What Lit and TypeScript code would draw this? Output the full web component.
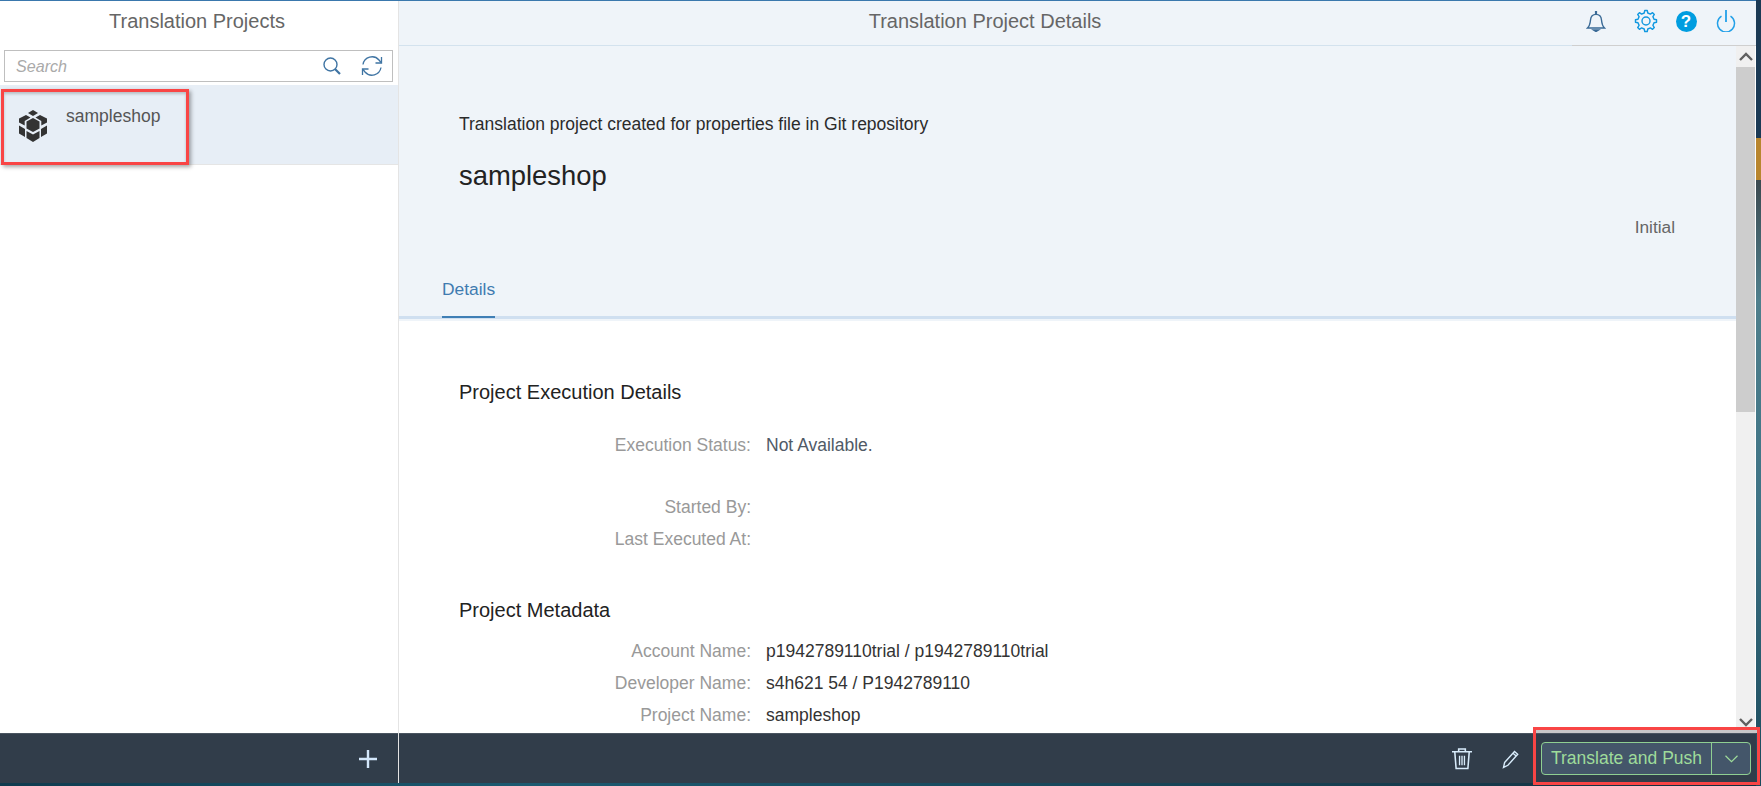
import { LitElement, html, css, svg } from 'lit'
import { customElement } from 'lit/decorators.js'

// outline of a gear with rounded-ish teeth, centred on 12,12
function gearPath(teeth = 8, outer = 10.6, inner = 8.2) {
    const pts: string[] = []
    const step = (Math.PI * 2) / teeth
    for (let i = 0; i < teeth; i++) {
        const a = i * step - Math.PI / 2
        const corners: [number, number][] = [
            [a - step * 0.28, inner],
            [a - step * 0.15, outer],
            [a + step * 0.15, outer],
            [a + step * 0.28, inner]
        ]
        for (const [ang, r] of corners) {
            pts.push(`${(12 + Math.cos(ang) * r).toFixed(2)} ${(12 + Math.sin(ang) * r).toFixed(2)}`)
        }
    }
    return 'M' + pts.join('L') + 'Z'
}

const cubeIcon = svg`
    <polygon points="14,0 19,3 14,6 9,3" />
    <polygon points="14,8 20.5,11.5 20.5,18.5 14,22 7.5,18.5 7.5,11.5" />
    <polygon points="7,5 11.5,7.5 5.7,11 5.7,15.5 0,12.5 0,8.5" />
    <polygon points="21,5 16.5,7.5 22.3,11 22.3,15.5 28,12.5 28,8.5" />
    <polygon points="0,15.5 6,19 6,27 0,23.5" />
    <polygon points="28,15.5 22,19 22,27 28,23.5" />
    <polygon points="7.5,21 14,24.5 20.5,21 20.5,28 14,32 7.5,28" />
`

const metadata = [
    ['Account Name:', 'p1942789110trial / p1942789110trial'],
    ['Developer Name:', 's4h621 54 / P1942789110'],
    ['Project Name:', 'sampleshop']
]

@customElement('app-root')
export class AppRoot extends LitElement {
    static styles = css`
        :host {
            display: flex;
            position: relative;
            width: 1761px;
            height: 786px;
            overflow: hidden;
            font-family: 'Liberation Sans', Arial, sans-serif;
            font-size: 17.3px;
            background: linear-gradient(
                to bottom,
                #1b3a55 0,
                #1b3a55 138px,
                #b8862f 138px,
                #b8862f 180px,
                #3c4a50 180px,
                #4f7f8c 300px,
                #3f7486 500px,
                #1a4a5c 786px
            );
        }

        .window {
            width: 1756px;
            display: flex;
            flex-direction: column;
            border-top: 1px solid #3a78ad;
            box-sizing: border-box;
        }

        .panes {
            display: flex;
            height: 782px;
            background: #fff;
        }

        .bottom-strip {
            height: 3px;
            background: linear-gradient(to right, #0f3b4e, #1c5a70 30%, #14303f);
        }

        .master {
            width: 398px;
            display: flex;
            flex-direction: column;
            border-right: 1px solid #e4e4e4;
            flex: none;
        }

        .detail {
            flex: 1;
            min-width: 0;
            display: flex;
            flex-direction: column;
        }

        .master-title {
            height: 44px;
            line-height: 40px;
            padding-right: 4px;
            text-align: center;
            font-size: 20px;
            color: #666;
        }

        .search {
            display: flex;
            align-items: center;
            height: 32px;
            margin: 5px 5px 3px 4px;
            padding: 0 9px 0 11px;
            border: 1px solid #bfbfbf;
            box-sizing: border-box;
            font-size: 16.1px;
            font-style: italic;
            color: #aaa;
        }

        .search span {
            flex: 1;
        }

        .search svg {
            display: block;
            fill: none;
            stroke: #3f74a3;
        }

        .search .find {
            margin-right: 19px;
        }

        .list {
            flex: 1;
        }

        .item {
            display: flex;
            height: 80px;
            padding: 25px 0 0 19px;
            box-sizing: border-box;
            background: #e7eef6;
            border-bottom: 1px solid #e5e5e5;
        }

        .item svg {
            fill: #333;
            flex: none;
        }

        .item span {
            margin: 0 0 0 19px;
            position: relative;
            top: -4px;
            font-size: 17.5px;
            line-height: 20px;
            color: #555;
        }

        .footer {
            height: 50px;
            flex: none;
            display: flex;
            align-items: center;
            justify-content: flex-end;
            box-sizing: border-box;
            background: #313d4a;
            border-top: 1px solid #4a5560;
        }

        .master .footer {
            padding-right: 21px;
        }

        .footer svg {
            display: block;
            fill: none;
        }

        .detail-bar {
            height: 45px;
            flex: none;
            display: flex;
            align-items: center;
            background: #eff4f9;
            box-sizing: border-box;
            border-bottom: 1px solid;
            border-image: linear-gradient(to right, #d3e2ee 1172px, #cfcfcf 1172px) 1;
        }

        .detail-title {
            flex: 1;
            text-align: center;
            font-size: 20px;
            color: #666;
            margin-top: -4px;
        }

        .shell-icons {
            width: 185px;
            height: 100%;
            display: flex;
            justify-content: flex-end;
            align-items: center;
            padding-right: 10px;
            box-sizing: border-box;
        }

        .slot {
            width: 40px;
            display: flex;
            justify-content: center;
            margin-top: -4px;
        }

        .slot.bell {
            margin-right: 10px;
        }

        .slot svg {
            display: block;
            fill: none;
        }

        .help {
            width: 21px;
            height: 21px;
            border-radius: 50%;
            background: #009de0;
            color: #fff;
            font-weight: 700;
            font-size: 17px;
            line-height: 21px;
            text-align: center;
        }

        .body {
            flex: 1;
            min-height: 0;
            display: flex;
            padding-right: 1px;
            box-sizing: border-box;
            background: #fff;
        }

        .scroller {
            flex: 1;
            min-width: 0;
            overflow: hidden;
        }

        .scrollbar {
            width: 19px;
            flex: none;
            display: flex;
            flex-direction: column;
            background: #f0f0f0;
        }

        .scrollbar .arrow {
            height: 21px;
            flex: none;
            display: flex;
            align-items: center;
            justify-content: center;
        }

        .scrollbar .arrow svg {
            display: block;
            fill: none;
            stroke: #606060;
            stroke-width: 2.4;
        }

        .scrollbar .thumb {
            height: 345px;
            flex: none;
            background: #cdcdcd;
        }

        .scrollbar .rest {
            flex: 1;
        }

        .object-header {
            background: #eff4f9;
            padding-top: 68px;
            height: 270px;
            box-sizing: border-box;
        }

        .object-header .sub {
            margin: 0 0 0 60px;
            line-height: 20px;
            font-size: 17.5px;
            color: #2b2b2b;
        }

        .object-header h1 {
            margin: 26px 0 0 60px;
            font-size: 27.4px;
            font-weight: 400;
            line-height: 32px;
            color: #222;
        }

        .object-header .state {
            margin: 25px 61px 0 0;
            text-align: right;
            line-height: 20px;
            color: #666;
        }

        .tabs {
            display: flex;
            height: 0;
            background: #eff4f9;
            border-bottom: 3px solid #cfdff0;
            box-shadow: 0 2px 0 #eff4f9;
            padding-left: 43px;
        }

        .tab {
            height: 39px;
            line-height: 20px;
            margin-top: -37px;
            box-sizing: border-box;
            border-bottom: 2px solid #3f7fb5;
            color: #3f7bb0;
            font-size: 17.4px;
        }

        .content {
            padding: 61px 0 0 60px;
        }

        h2 {
            margin: 0;
            font-size: 20px;
            font-weight: 400;
            line-height: 24px;
            color: #222;
        }

        .form {
            display: grid;
            grid-template-columns: 292px 1fr;
            column-gap: 15px;
            grid-auto-rows: 32px;
            line-height: 32px;
            font-size: 17.5px;
        }

        .form .label {
            text-align: right;
            color: #999;
        }

        .form .value {
            color: #333;
        }

        .form.status {
            margin-top: 25px;
        }

        .form.status .value {
            color: #505a66;
        }

        .form.exec {
            margin-top: 30px;
        }

        .content h2.second {
            margin-top: 43px;
        }

        .form.meta {
            margin-top: 13px;
        }

        .actions {
            padding-right: 5px;
        }

        .actions .trash {
            margin-right: 29px;
        }

        .actions .pencil {
            margin-right: 16px;
        }

        .split {
            display: flex;
            height: 33px;
            border: 1px solid #8fcf92;
            border-radius: 4px;
            box-sizing: border-box;
            background: #44566a;
            color: #9fdc9a;
            line-height: 31px;
            font-size: 17.5px;
            margin-left: 4px;
        }

        .split .label {
            width: 169px;
            text-align: center;
            border-right: 1px solid #8fcf92;
        }

        .split .more {
            width: 38px;
            display: flex;
            align-items: center;
            justify-content: center;
        }

        .mark {
            position: absolute;
            box-sizing: border-box;
            border: 3px solid #f94545;
            pointer-events: none;
        }

        .mark.item-mark {
            left: 1px;
            top: 89px;
            width: 188px;
            height: 76px;
            box-shadow: 2px 2px 4px rgba(0, 0, 0, 0.35), inset 0 2px 3px rgba(0, 0, 0, 0.2);
        }

        .mark.button-mark {
            left: 1533px;
            top: 727px;
            width: 227px;
            height: 58px;
            box-shadow: inset 0 3px 0 #c8c8c8;
        }
    `

    render() {
        return html`
            <div class="window">
                <div class="panes">
                    <section class="master">
                        <div class="master-title">Translation Projects</div>
                        <div class="search">
                            <span>Search</span>
                            <svg class="find" width="20" height="20" viewBox="0 0 20 20">
                                <circle cx="8.5" cy="8.5" r="6.5" stroke-width="1.4" />
                                <path d="M13 13l5 5" stroke-width="2.2" />
                            </svg>
                            <svg width="22" height="22" viewBox="0 0 22 22" stroke-width="1.3">
                                <path d="M2 9.5A9.2 9.2 0 0 1 18 5l2 2.5" />
                                <path d="M20.5 2v6h-6" />
                                <path d="M20 12.5A9.2 9.2 0 0 1 4 17l-2-2.5" />
                                <path d="M1.5 20v-6h6" />
                            </svg>
                        </div>
                        <div class="list">
                            <div class="item">
                                <svg width="28" height="32" viewBox="0 0 28 32">${cubeIcon}</svg>
                                <span>sampleshop</span>
                            </div>
                        </div>
                        <div class="footer">
                            <svg width="18" height="18" viewBox="0 0 18 18">
                                <path d="M9 0v18M0 9h18" stroke="#d3e7fb" stroke-width="2.4" />
                            </svg>
                        </div>
                    </section>
                    <section class="detail">
                        <div class="detail-bar">
                            <div class="detail-title">Translation Project Details</div>
                            <div class="shell-icons">
                                <div class="slot bell">
                                    <svg width="20" height="22" viewBox="0 0 20 22" stroke="#3a6a96" stroke-width="1.4">
                                        <path d="M1.5 18c2-2 2.6-3.5 3-8 .3-3.4 2-5.6 5.5-5.6s5.2 2.2 5.5 5.6c.4 4.5 1 6 3 8z" />
                                        <path d="M10 1v3.4" stroke-width="2.2" />
                                        <path d="M7.5 20h5l-2.5 1.5z" fill="#3a6a96" />
                                    </svg>
                                </div>
                                <div class="slot">
                                    <svg width="24" height="24" viewBox="0 0 24 24" stroke="#1098e0" stroke-width="1.4">
                                        <path d="${gearPath()}" stroke-linejoin="round" />
                                        <circle cx="12" cy="12" r="4" />
                                    </svg>
                                </div>
                                <div class="slot"><div class="help">?</div></div>
                                <div class="slot">
                                    <svg width="20" height="22" viewBox="0 0 20 22" stroke="#22a0e8" stroke-width="1.5">
                                        <path d="M5.5 6.2a8.5 8.5 0 1 0 9 0" />
                                        <path d="M10 0v12" stroke-width="1.8" />
                                    </svg>
                                </div>
                            </div>
                        </div>
                        <div class="body">
                            <div class="scroller">
                                <div class="object-header">
                                    <p class="sub">Translation project created for properties file in Git repository</p>
                                    <h1>sampleshop</h1>
                                    <div class="state">Initial</div>
                                </div>
                                <div class="tabs"><div class="tab">Details</div></div>
                                <div class="content">
                                    <h2>Project Execution Details</h2>
                                    <div class="form status">
                                        <div class="label">Execution Status:</div>
                                        <div class="value">Not Available.</div>
                                    </div>
                                    <div class="form exec">
                                        <div class="label">Started By:</div>
                                        <div class="value"></div>
                                        <div class="label">Last Executed At:</div>
                                        <div class="value"></div>
                                    </div>
                                    <h2 class="second">Project Metadata</h2>
                                    <div class="form meta">
                                        ${metadata.map(
                                            ([label, value]) => html`
                                                <div class="label">${label}</div>
                                                <div class="value">${value}</div>
                                            `
                                        )}
                                    </div>
                                </div>
                            </div>
                            <div class="scrollbar">
                                <div class="arrow">
                                    <svg width="14" height="9" viewBox="0 0 14 9"><path d="M1 8l6-6 6 6" /></svg>
                                </div>
                                <div class="thumb"></div>
                                <div class="rest"></div>
                                <div class="arrow">
                                    <svg width="14" height="9" viewBox="0 0 14 9"><path d="M1 1l6 6 6-6" /></svg>
                                </div>
                            </div>
                        </div>
                        <div class="footer actions">
                            <svg class="trash" width="20" height="23" viewBox="0 0 18 20" stroke="#d8ecfb" stroke-width="1.4">
                                <path d="M0 4h18M6 3.5V1.5h6v2" />
                                <path d="M2.5 4l1.2 15h10.600l1.200-15" />
                                <path d="M6.8 7.5v8.500M9 7.500v8.500M11.200 7.500v8.500" stroke-width="1.2" />
                            </svg>
                            <svg class="pencil" width="20" height="20" viewBox="0 0 18 20" stroke="#d8ecfb" stroke-width="1.4">
                                <path d="M2.6 13.5L12.5 2.500l3.200 2.800-9.800 11-4.400 2.200z" />
                                <path d="M11 4.200l3.200 2.800" />
                            </svg>
                            <div class="split">
                                <div class="label">Translate and Push</div>
                                <div class="more">
                                    <svg width="13" height="8" viewBox="0 0 13 8" stroke="#9fdc9a" stroke-width="1.2">
                                        <path d="M.5.8l6 5.8 6-5.800" />
                                    </svg>
                                </div>
                            </div>
                        </div>
                    </section>
                </div>
                <div class="bottom-strip"></div>
            </div>
            <div class="mark item-mark"></div>
            <div class="mark button-mark"></div>
        `
    }
}
